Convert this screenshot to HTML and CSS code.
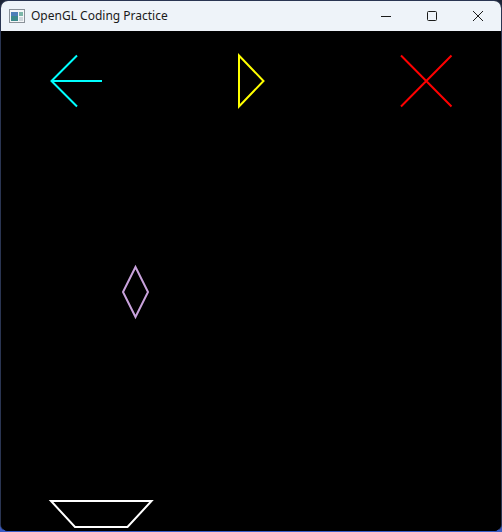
FILE: index.html
```html
<!DOCTYPE html>
<html>
<head>
<meta charset="utf-8">
<title>OpenGL Coding Practice</title>
<link rel="stylesheet" href="styles.css">
</head>
<body>
<div class="window">
  <div class="titlebar">
    <div class="app">
      <svg class="app-icon" width="16" height="16" viewBox="0 0 16 16">
        <rect x="0.5" y="1.5" width="15" height="13" fill="#f4f6f8" stroke="#8a9199"/>
        <rect x="2" y="4" width="7" height="9" fill="#3c8a8c"/>
        <rect x="2" y="4" width="7" height="4" fill="#4d7fb8"/>
        <rect x="10" y="4" width="4" height="4" fill="#7cb6a8"/>
        <rect x="10" y="9" width="4" height="4" fill="#cfd6dc"/>
      </svg>
      <span class="title">OpenGL Coding Practice</span>
    </div>
    <div class="controls">
      <div class="ctl">
        <svg width="10" height="10" viewBox="0 0 10 10"><path d="M0 5.5H10" stroke="#1b1b1b" stroke-width="1"/></svg>
      </div>
      <div class="ctl">
        <svg width="10" height="10" viewBox="0 0 10 10"><rect x="0.5" y="0.5" width="9" height="9" rx="1" fill="none" stroke="#1b1b1b" stroke-width="1"/></svg>
      </div>
      <div class="ctl">
        <svg width="10" height="10" viewBox="0 0 10 10"><path d="M0 0L10 10M10 0L0 10" stroke="#1b1b1b" stroke-width="1"/></svg>
      </div>
    </div>
  </div>
  <div class="canvas">
    <svg class="scene" width="500" height="499" viewBox="1 31 500 499">
      <g fill="none" stroke-width="2" stroke-linejoin="miter">
        <path d="M77 55.5L51.5 81L77 106.5M51.5 81H102" stroke="#00ffff"/>
        <path d="M239 55.5V106.5L263.5 81Z" stroke="#ffff00"/>
        <path d="M401 55.5L451.5 106.5M451.5 55.5L401 106.5" stroke="#ff0000"/>
        <path d="M135.5 267L123 292L135.5 317L148 292Z" stroke="#c9a2dc"/>
        <path d="M51 501H151.5L127.5 527H75Z" stroke="#ffffff"/>
      </g>
    </svg>
  </div>
</div>
</body>
</html>
```

FILE: styles.css
```css
html, body {
  margin: 0;
  padding: 0;
  width: 502px;
  height: 532px;
  overflow: hidden;
}
body {
  background: linear-gradient(180deg, #1c2335 0%, #1f2a4a 60%, #3a5cc4 100%);
  font-family: "Segoe UI", "Noto Sans", "Open Sans", sans-serif;
}
.window {
  box-sizing: border-box;
  width: 502px;
  height: 532px;
  border: 1px solid #2a3552;
  border-bottom-color: #3b5ec8;
  border-radius: 8px;
  overflow: hidden;
  display: flex;
  flex-direction: column;
  background: #000;
}
.titlebar {
  height: 30px;
  flex: none;
  background: #eef3f9;
  display: flex;
  align-items: center;
  justify-content: space-between;
}
.app {
  display: flex;
  align-items: center;
  padding-left: 8px;
  gap: 6px;
}
.app-icon {
  display: block;
}
.title {
  font-size: 12px;
  color: #1a1a1a;
  line-height: 16px;
}
.controls {
  display: flex;
  height: 30px;
}
.ctl {
  width: 46px;
  height: 30px;
  display: flex;
  align-items: center;
  justify-content: center;
}
.ctl svg {
  display: block;
}
.canvas {
  flex: 1;
  background: #000;
}
.scene {
  display: block;
}
```
